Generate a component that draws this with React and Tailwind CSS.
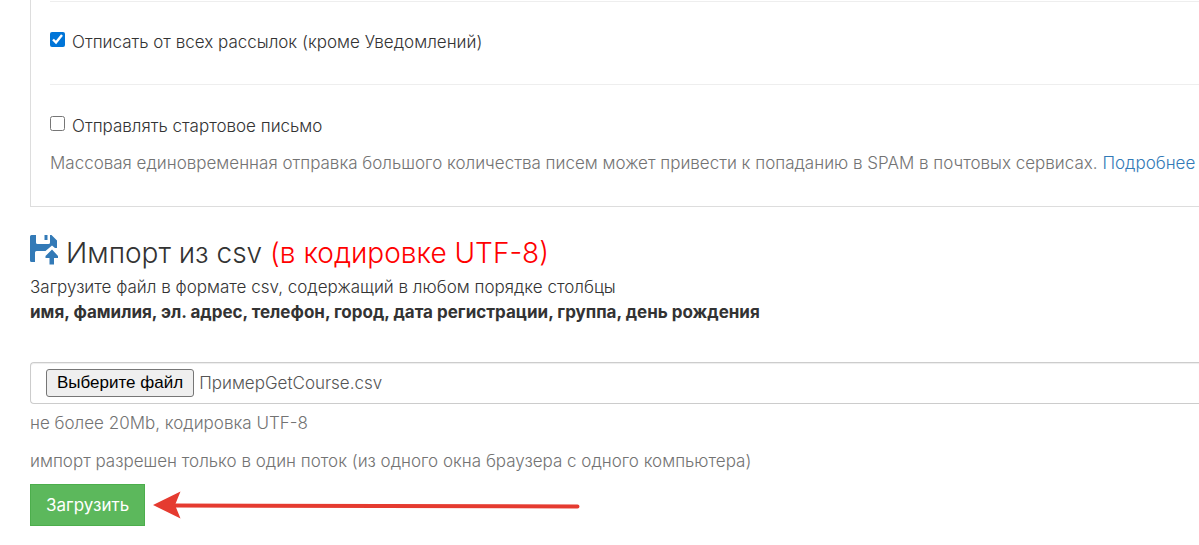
import React, { useRef, useState } from "react";

const SaveUploadIcon = () => (
  <svg className="w-7 h-[30px] shrink-0" viewBox="0 0 28 30" fill="#337ab7" aria-hidden="true">
    <path d="M1.500 0H6v7.500q0 1.500 1.500 1.500h11q1.500 0 1.500-1.500V0h1.500L27 5.500v7.500h-2l-3-2.500-6.500 5.500H6.500q-1.500 0-1.500 1.500V27H1.500Q0 27 0 25.500v-24Q0 0 1.500 0z" />
    <path d="M14.500 0h3v5h-3z" />
    <path d="M22 14.500l6 6.500v2h-4v6.500h-4.500V23H15.500v-2z" />
  </svg>
);

const ArrowMark = () => (
  <svg className="w-[427px] h-7 shrink-0" viewBox="0 0 427 28" aria-hidden="true">
    <path d="M20 14.500L424.500 15.500" stroke="#e53b30" strokeWidth="4" strokeLinecap="round" />
    <path d="M0 14L27.500 0.500L22 14L27.500 27.500z" fill="#e53b30" />
  </svg>
);

const App = () => {
  const [unsubscribe, setUnsubscribe] = useState(true);
  const [sendWelcome, setSendWelcome] = useState(false);
  const [fileName, setFileName] = useState("ПримерGetCourse.csv");
  const fileRef = useRef(null);

  return (
    <main className="pl-[30px] bg-white font-['Inter',sans-serif] font-light text-[17px] leading-[25px] text-[#333333]">
      {/* Options panel */}
      <section className="pt-px pl-[19px] border-l border-b border-[#dddddd]">
        <div className="border-t border-[#eeeeee] pt-7 pb-[29px]">
          <label className="flex items-center gap-[7px]">
            <input
              type="checkbox"
              className="size-[15px] mb-[6px] accent-[#0075d8]"
              checked={unsubscribe}
              onChange={(e) => setUnsubscribe(e.target.checked)}
            />
            Отписать от всех рассылок (кроме Уведомлений)
          </label>
        </div>
        <div className="border-t border-[#eeeeee] pt-[29px] pb-[30px]">
          <label className="flex items-center gap-[7px]">
            <input
              type="checkbox"
              className="size-[15px] mb-[6px]"
              checked={sendWelcome}
              onChange={(e) => setSendWelcome(e.target.checked)}
            />
            Отправлять стартовое письмо
          </label>
          <p className="mt-3 text-[#737373]">
            Массовая единовременная отправка большого количества писем может привести к попаданию в SPAM в почтовых сервисах.{" "}
            <a href="#more" className="text-[#337ab7]">Подробнее</a>
          </p>
        </div>
      </section>

      {/* CSV import */}
      <section className="pt-7">
        <h2 className="flex items-start gap-2 text-[28px] leading-9">
          <SaveUploadIcon />
          <span>
            Импорт из csv <span className="text-[#ff0000]">(в кодировке UTF-8)</span>
          </span>
        </h2>
        <p className="mt-1">Загрузите файл в формате csv, содержащий в любом порядке столбцы</p>
        <p className="font-bold">
          имя, фамилия, эл. адрес, телефон, город, дата регистрации, группа, день рождения
        </p>

        <div className="mt-[37px] flex items-center gap-[5px] h-[42px] pl-[15px] border border-r-0 border-[#cccccc] rounded-l shadow-[inset_0_1px_1px_rgba(0,0,0,0.075)]">
          <button
            type="button"
            onClick={() => fileRef.current.click()}
            className="h-7 px-[10px] border border-[#767676] rounded-[3px] bg-[#efefef] text-black font-normal text-[17px] leading-6 font-['Liberation_Sans',sans-serif]"
          >
            Выберите файл
          </button>
          <input
            ref={fileRef}
            type="file"
            accept=".csv"
            aria-label="Файл csv"
            className="hidden"
            onChange={(e) => setFileName(e.target.files[0]?.name ?? "")}
          />
          <span className="text-[#555555]">{fileName}</span>
        </div>
        <p className="mt-[7px] text-[#737373]">не более 20Mb, кодировка UTF-8</p>
        <p className="mt-[13px] text-[#737373]">
          импорт разрешен только в один поток (из одного окна браузера с одного компьютера)
        </p>

        <div className="mt-[10px] flex items-center gap-2">
          <button
            type="button"
            className="h-[42px] px-[15px] border border-[#4cae4c] bg-[#5cb85c] text-white font-normal"
          >
            Загрузить
          </button>
          <ArrowMark />
        </div>
      </section>
    </main>
  );
};

export default App;
